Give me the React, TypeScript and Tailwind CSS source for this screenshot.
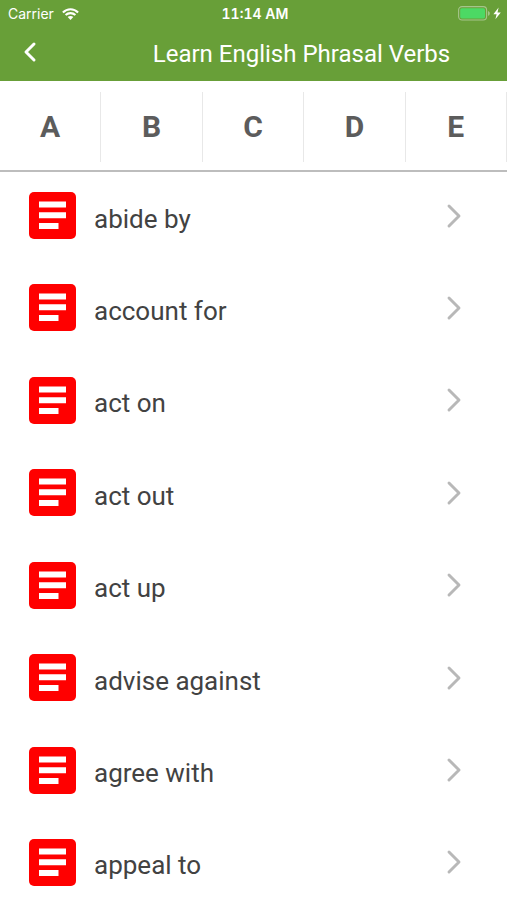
import { useState } from 'react';
import { ChevronLeft, ChevronRight } from 'lucide-react';

const letters = ['A', 'B', 'C', 'D', 'E'];

const verbs = [
  'abide by',
  'account for',
  'act on',
  'act out',
  'act up',
  'advise against',
  'agree with',
  'appeal to',
];

function WifiIcon() {
  return (
    <svg viewBox="0 0 17 12" className="h-3 w-[17px]" fill="none" stroke="white" strokeWidth="2.1">
      <path d="M0.9 4.4C5.2 0.1 11.8 0.1 16.1 4.4" />
      <path d="M3.6 7.1C6.4 4.4 10.6 4.4 13.4 7.1" />
      <path d="M8.5 12L5.7 9.1C7.3 7.7 9.7 7.7 11.3 9.1Z" fill="white" stroke="none" />
    </svg>
  );
}

function BatteryIcon() {
  return (
    <svg viewBox="0 0 44 15" className="h-[15px] w-11">
      <rect x="0.6" y="0.6" width="28" height="13.4" rx="3.4" fill="none" stroke="#a5c58c" strokeWidth="1.1" />
      <rect x="2.2" y="2.2" width="24.8" height="10.2" rx="1.6" fill="#4cd964" />
      <path d="M30 5v4.8c1.2-.4 1.8-1.3 1.8-2.4S31.200 5.400 30 5Z" fill="#a5c58c" />
      <path d="M40.600 1.600L35.400 8.200H38.600L37.400 13.200L42.800 6.400H39.500Z" fill="white" />
    </svg>
  );
}

function ArticleIcon() {
  return (
    <svg viewBox="0 0 47 47" className="size-[47px] shrink-0">
      <rect width="47" height="47" rx="5" fill="#ff0000" />
      <path fill="white" d="M10 9.500h27v6H10zM10 20.200h27v6H10zM10 31h19.500v6H10z" />
    </svg>
  );
}

export default function App() {
  const [active, setActive] = useState('A');

  return (
    <div className="flex min-h-screen flex-col bg-white font-['Roboto',sans-serif]">
      <header className="bg-[#689f38] pb-2 text-white">
        {/* Status bar */}
        <div className="grid h-7 grid-cols-3 items-center pl-2 pr-[5px] font-['Inter',sans-serif] text-sm">
          <div className="flex items-center gap-2">
            <span>Carrier</span>
            <WifiIcon />
          </div>
          <span className="text-center font-semibold tabular-nums">11:14 AM</span>
          <div className="flex justify-end pb-0.5">
            <BatteryIcon />
          </div>
        </div>

        {/* Title bar */}
        <div className="flex h-[45px] items-end">
          <button aria-label="Back" className="flex h-[42px] w-24 items-center pl-3.5">
            <ChevronLeft className="size-8" strokeWidth={2.25} />
          </button>
          <h1 className="flex-1 pb-[3px] text-center text-2xl leading-8 font-normal">
            Learn English Phrasal Verbs
          </h1>
        </div>
      </header>

      {/* Letter tabs */}
      <nav className="grid grid-cols-5 border-b-2 border-[#bdbdbd] pt-[11px] pb-2">
        {letters.map((letter) => (
          <button
            key={letter}
            onClick={() => setActive(letter)}
            aria-pressed={active === letter}
            className="h-[70px] border-r border-[#e8e8e8] text-3xl font-bold text-[#5c5c5c]"
          >
            {letter}
          </button>
        ))}
      </nav>

      {/* Verb list */}
      <ul className="flex flex-1 flex-col justify-between pt-3 pb-1.5">
        {verbs.map((verb) => (
          <li key={verb}>
            <button className="flex w-full items-center py-2 pr-[33px] pl-[29px] text-left">
              <ArticleIcon />
              <span className="flex-1 pt-1.5 pl-[18px] text-[26px] leading-8 text-[#424242]">{verb}</span>
              <ChevronRight className="size-10 text-[#b8b8b8]" strokeWidth={1.75} />
            </button>
          </li>
        ))}
      </ul>
    </div>
  );
}
